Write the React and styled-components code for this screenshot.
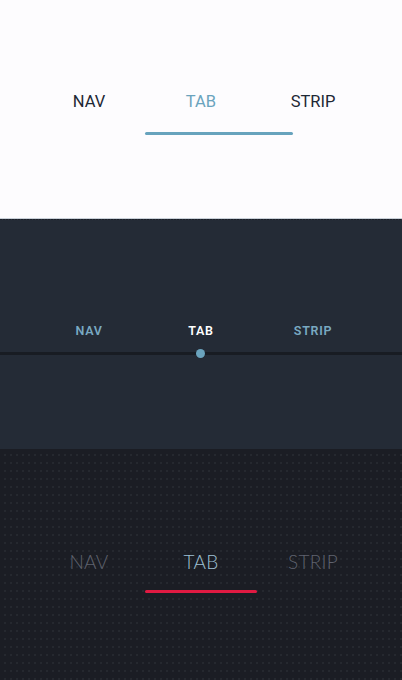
import React from "react";
import styled, { createGlobalStyle } from "styled-components";

const Global = createGlobalStyle`
  html, body { margin: 0; padding: 0; }
  body { width: 402px; height: 680px; overflow: hidden; font-family: Roboto, "Liberation Sans", sans-serif; }
  #root { width: 402px; height: 680px; display: flex; flex-direction: column; }
`;

const Page = styled.div`
  display: flex;
  flex-direction: column;
  width: 402px;
  height: 680px;
`;

const LightSection = styled.section`
  height: 218px;
  background: #fdfcfe;
  display: flex;
  flex-direction: column;
  padding-top: 92px;
  box-sizing: border-box;
`;

const SlateSection = styled.section`
  height: 231px;
  background: #242b36;
  border-top: 1px solid #c9d0d8;
  box-sizing: border-box;
  display: flex;
  flex-direction: column;
  padding-top: 104px;
  position: relative;
  &::before {
    content: "";
    position: absolute;
    left: 0; right: 0; top: 0;
    height: 1px;
    background: repeating-linear-gradient(90deg, #1b2029 0 2px, #2a313c 2px 3px);
  }
`;

const DarkSection = styled.section`
  flex: 1;
  background-color: #1b1d24;
  background-image: radial-gradient(circle at 1px 1px, #25282f 0.7px, transparent 1.1px);
  background-size: 6px 8px;
  background-position: 4px 5px;
  display: flex;
  flex-direction: column;
  padding-top: 102px;
  box-sizing: border-box;
`;

const Tabs = styled.div`
  display: grid;
  grid-template-columns: repeat(3, 112px);
  justify-content: center;
`;

const Tab = styled.div`
  text-align: center;
  height: ${p => p.$h}px;
  line-height: ${p => p.$h}px;
  white-space: nowrap;
`;

const LightTab = styled(Tab)`
  font-family: Roboto, "Liberation Sans", sans-serif;
  font-size: 16.5px;
  font-weight: 400;
  color: ${p => (p.$active ? "#6aa3bd" : "#1d2835")};
`;

const SlateTab = styled(Tab)`
  font-family: Roboto, "Liberation Sans", sans-serif;
  font-size: 12.5px;
  font-weight: 600;
  letter-spacing: 0.7px;
  color: ${p => (p.$active ? "#ffffff" : "#79a9c2")};
`;

const DarkTab = styled(Tab)`
  font-family: Lato, "Open Sans", sans-serif;
  font-size: 19px;
  font-weight: 300;
  letter-spacing: 0.3px;
  color: ${p => (p.$active ? "#9ec0d3" : "#5f626e")};
`;

const Track = styled.div`
  display: flex;
  margin-top: ${p => p.$gap}px;
`;

const Bar = styled.div`
  height: 3px;
  border-radius: 2px;
  background: ${p => p.$color};
`;

const Rail = styled.div`
  position: relative;
  margin-top: 13px;
  height: 3px;
  background: #181c23;
`;

const Knob = styled.div`
  position: absolute;
  left: 196px;
  top: -3px;
  width: 9px;
  height: 9px;
  border-radius: 50%;
  background: #6aa3bd;
`;

const labels = ["NAV", "TAB", "STRIP"];

export default function App() {
  return (
    <Page>
      <Global />
      <LightSection>
        <Tabs>
          {labels.map((l, i) => (
            <LightTab key={l} $h={20} $active={i === 1}>{l}</LightTab>
          ))}
        </Tabs>
        <Track $gap={20}>
          <Bar $color="#67a3bd" style={{ marginLeft: 145, width: 148 }} />
        </Track>
      </LightSection>
      <SlateSection>
        <Tabs>
          {labels.map((l, i) => (
            <SlateTab key={l} $h={16} $active={i === 1}>{l}</SlateTab>
          ))}
        </Tabs>
        <Rail>
          <Knob />
        </Rail>
      </SlateSection>
      <DarkSection>
        <Tabs>
          {labels.map((l, i) => (
            <DarkTab key={l} $h={22} $active={i === 1}>{l}</DarkTab>
          ))}
        </Tabs>
        <Track $gap={17}>
          <Bar $color="#e01a42" style={{ marginLeft: 145, width: 112 }} />
        </Track>
      </DarkSection>
    </Page>
  );
}
